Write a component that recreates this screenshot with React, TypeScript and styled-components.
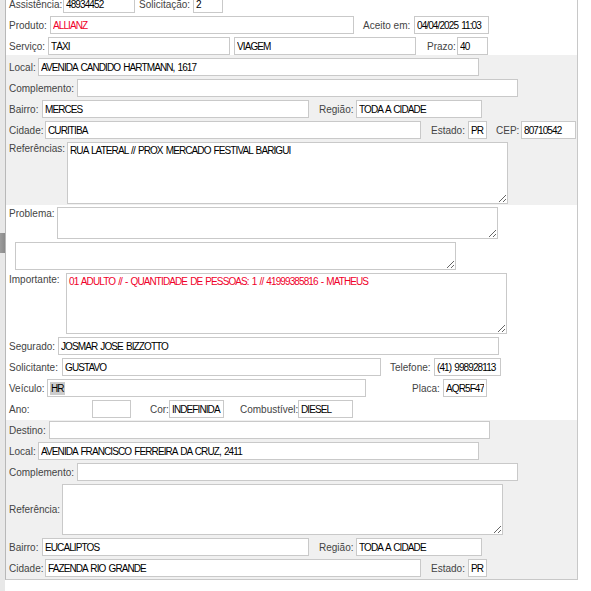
import React from 'react';
import styled, { createGlobalStyle, css } from 'styled-components';

const GlobalStyle = createGlobalStyle`
  html, body {
    margin: 0;
    padding: 0;
    background: #ffffff;
    overflow: hidden;
  }
`;

const LABEL_FONT = `'Liberation Sans', Arial, sans-serif`;
const VALUE_FONT = `'Liberation Sans', Arial, sans-serif`;

// campo com rótulo + caixa de texto
interface FieldProps {
  label?: string;
  lw?: number;
  w: number;
  ml?: number;
  value?: string;
  red?: boolean;
}

const Field = ({ label, lw = 0, w, ml = 0, value = '', red }: FieldProps) => (
  <>
    {label && (
      <Label $w={lw} $ml={ml}>
        {label}
      </Label>
    )}
    <Input $w={w} $ml={label ? 0 : ml} $red={red} readOnly value={value} />
  </>
);

interface AreaProps {
  label?: string;
  lw?: number;
  h: number;
  ml?: number;
  value?: string;
  red?: boolean;
  labelTop?: boolean;
}

const AreaField = ({ label, lw = 0, h, ml = 0, value = '', red, labelTop = true }: AreaProps) => (
  <>
    {label && (
      <Label $w={lw} $ml={ml} $top={labelTop}>
        {label}
      </Label>
    )}
    <Area $w={441} $h={h} $ml={label ? 0 : ml} $red={red} readOnly value={value} />
  </>
);

const App = () => (
  <>
    <GlobalStyle />
    <Screen>
      <Rail>
        <Thumb />
      </Rail>

      <Panel>
        {/* topo: atendimento */}
        <Section $scroll={5}>
          <Row>
            <Field label="Assistência:" lw={54} w={72} value="48934452" />
            <Field label="Solicitação:" lw={54} w={30} ml={4} value="2" />
          </Row>
          <Row>
            <Field label="Produto:" lw={41} w={304} value="ALLIANZ" red />
            <Field label="Aceito em:" lw={51} w={75} ml={9} value="04/04/2025 11:03" />
          </Row>
          <Row>
            <Field label="Serviço:" lw={39} w={182} value="TÁXI" />
            <Field w={182} ml={4} value="VIAGEM" />
            <Field label="Prazo:" lw={30} w={31} ml={11} value="40" />
          </Row>
        </Section>

        {/* origem */}
        <Section $gray $pt={3} $pb={1}>
          <Row>
            <Field label="Local:" lw={29} w={441} value="AVENIDA CANDIDO HARTMANN, 1617" />
          </Row>
          <Row>
            <Field label="Complemento:" lw={68} w={441} />
          </Row>
          <Row>
            <Field label="Bairro:" lw={33} w={267} value="MERCES" />
            <Field label="Região:" lw={37} w={126} ml={10} value="TODA A CIDADE" />
          </Row>
          <Row>
            <Field label="Cidade:" lw={36} w={376} value="CURITIBA" />
            <Field label="Estado:" lw={37} w={19} ml={10} value="PR" />
            <Field label="CEP:" lw={25} w={55} ml={9} value="80710542" />
          </Row>
          <Row $top>
            <AreaField
              label="Referências:"
              lw={58}
              h={62}
              value="RUA LATERAL // PROX MERCADO FESTIVAL BARIGUI"
            />
          </Row>
        </Section>

        {/* problema / segurado */}
        <Section $pt={2} $pb={2}>
          <Row $top>
            <AreaField label="Problema:" lw={48} h={32} />
          </Row>
          <Row $top>
            <AreaField h={28} ml={6} />
          </Row>
          <Row $top>
            <AreaField
              label="Importante:"
              lw={57}
              h={61}
              red
              value="01 ADULTO // - QUANTIDADE DE PESSOAS: 1 // 41999385816 - MATHEUS"
            />
          </Row>
          <Row>
            <Field label="Segurado:" lw={49} w={441} value="JOSMAR JOSE BIZZOTTO" />
          </Row>
          <Row>
            <Field label="Solicitante:" lw={53} w={319} value="GUSTAVO" />
            <Field label="Telefone:" lw={44} w={67} ml={9} value="(41) 998928113" />
          </Row>
          <Row>
            <Label $w={38}>Veículo:</Label>
            <Input as="div" $w={319}>
              <Selected>HR</Selected>
            </Input>
            <Field label="Placa:" lw={31} w={44} ml={46} value="AQR5F47" />
          </Row>
          <Row>
            <Field label="Ano:" lw={83} w={39} />
            <Field label="Cor:" lw={19} w={55} ml={19} value="INDEFINIDA" />
            <Field label="Combustível:" lw={58} w={55} ml={16} value="DIESEL" />
          </Row>
        </Section>

        {/* destino */}
        <Section $gray $pt={1} $pb={2}>
          <Row>
            <Field label="Destino:" lw={40} w={441} />
          </Row>
          <Row>
            <Field label="Local:" lw={29} w={441} value="AVENIDA FRANCISCO FERREIRA DA CRUZ, 2411" />
          </Row>
          <Row>
            <Field label="Complemento:" lw={68} w={441} />
          </Row>
          <Row>
            <AreaField label="Referência:" lw={53} h={51} labelTop={false} />
          </Row>
          <Row>
            <Field label="Bairro:" lw={33} w={267} value="EUCALIPTOS" />
            <Field label="Região:" lw={37} w={126} ml={10} value="TODA A CIDADE" />
          </Row>
          <Row>
            <Field label="Cidade:" lw={36} w={376} value="FAZENDA RIO GRANDE" />
            <Field label="Estado:" lw={37} w={19} ml={10} value="PR" />
          </Row>
        </Section>
      </Panel>
    </Screen>
  </>
);

const Screen = styled.div`
  display: flex;
  align-items: flex-start;
  height: 591px;
  overflow: hidden;
`;

const Rail = styled.div`
  width: 5px;
  height: 591px;
  flex-shrink: 0;
  background: #e8e8e8;
  display: flex;
  flex-direction: column;
`;

const Thumb = styled.div`
  margin-top: 233px;
  height: 20px;
  background: linear-gradient(to right, #9c9c9c, #8a8a8a);
`;

const Panel = styled.div`
  width: 571px;
  flex-shrink: 0;
  border-left: 1px solid #b8b8b8;
  border-right: 1px solid #c8c8c8;
  border-bottom: 1px solid #c8c8c8;
  display: flex;
  flex-direction: column;
`;

const Section = styled.div<{ $gray?: boolean; $pt?: number; $pb?: number; $scroll?: number }>`
  display: flex;
  flex-direction: column;
  gap: 3px;
  background: ${(p) => (p.$gray ? '#f0f0f0' : '#ffffff')};
  padding: ${(p) => p.$pt ?? 0}px 0 ${(p) => p.$pb ?? 0}px 0;
  ${(p) =>
    p.$scroll &&
    css`
      margin-top: -${p.$scroll}px;
    `}
`;

const Row = styled.div<{ $top?: boolean }>`
  display: flex;
  align-items: ${(p) => (p.$top ? 'flex-start' : 'center')};
  padding-left: 3px;
`;

const Label = styled.span<{ $w: number; $ml?: number; $top?: boolean }>`
  width: ${(p) => p.$w}px;
  margin-left: ${(p) => p.$ml ?? 0}px;
  flex-shrink: 0;
  white-space: nowrap;
  font-family: ${LABEL_FONT};
  font-size: 10px;
  color: #444444;
  ${(p) =>
    p.$top &&
    css`
      align-self: flex-start;
      padding-top: 1px;
    `}
`;

const boxBase = css<{ $w: number; $ml?: number; $red?: boolean }>`
  box-sizing: border-box;
  width: ${(p) => p.$w}px;
  margin: 0 0 0 ${(p) => p.$ml ?? 0}px;
  flex-shrink: 0;
  border: 1px solid #c9c9c9;
  border-radius: 0;
  background: #ffffff;
  outline: none;
  font-family: ${VALUE_FONT};
  font-size: 10px;
  letter-spacing: -0.9px;
  word-spacing: 1.2px;
  color: ${(p) => (p.$red ? '#f0002a' : '#000000')};
`;

const Input = styled.input<{ $w: number; $ml?: number; $red?: boolean }>`
  ${boxBase};
  height: 18px;
  padding: 0 2px;
  display: flex;
  align-items: center;
  overflow: hidden;
  white-space: nowrap;
`;

const Area = styled.textarea<{ $w: number; $h: number; $ml?: number; $red?: boolean }>`
  ${boxBase};
  display: block;
  height: ${(p) => p.$h}px;
  padding: 2px 2px;
  line-height: 12px;
`;

const Selected = styled.span`
  background: #cccccc;
  padding: 1px 1px;
`;

export default App;
